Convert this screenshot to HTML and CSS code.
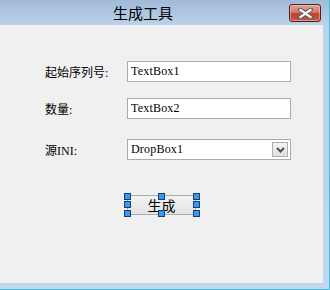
FILE: index.html
```html
<!DOCTYPE html>
<html lang="zh">
<head>
  <meta charset="UTF-8">
  <title>生成工具</title>
  <link rel="stylesheet" href="styles.css">
</head>
<body>

  <div class="window">
    <div class="titlebar">
      <span class="title">生成工具</span>
      <button class="close-btn" title="关闭">
        <svg width="15" height="11" viewBox="0 0 15 11">
          <path d="M2 1.5 L7.5 5 L13 1.5 M2 9.5 L7.5 6 L13 9.5" fill="none" stroke="#55606c" stroke-width="4" stroke-linecap="square"/>
          <path d="M2.5 2 L7.5 5.3 L12.5 2 M2.5 9 L7.5 5.7 L12.5 9" fill="none" stroke="#ffffff" stroke-width="2.2" stroke-linecap="square"/>
        </svg>
      </button>
    </div>

    <div class="client">
      <div class="form-row">
        <label class="form-label">起始序列号:</label>
        <input type="text" class="textbox" value="TextBox1" readonly>
      </div>
      <div class="form-row row-2">
        <label class="form-label">数量:</label>
        <input type="text" class="textbox" value="TextBox2" readonly>
      </div>
      <div class="form-row row-3">
        <label class="form-label">源INI:</label>
        <div class="combo">
          <span class="combo-text">DropBox1</span>
          <span class="combo-btn">
            <svg width="9" height="6" viewBox="0 0 9 6">
              <path d="M1 1 L4.5 4.5 L8 1" fill="none" stroke="#4d4d4d" stroke-width="2"/>
            </svg>
          </span>
        </div>
      </div>

      <div class="button-row">
        <div class="design-btn">
          <button class="gen-btn">生成</button>
          <span class="handle h-tl"></span>
          <span class="handle h-tm"></span>
          <span class="handle h-tr"></span>
          <span class="handle h-ml"></span>
          <span class="handle h-mr"></span>
          <span class="handle h-bl"></span>
          <span class="handle h-bm"></span>
          <span class="handle h-br"></span>
        </div>
      </div>
    </div>
  </div>

</body>
</html>
```

FILE: styles.css
```css
body {
  margin: 0;
  font-family: "Liberation Serif", "Noto Sans CJK SC", serif;
  background-color: #bdd3eb;
}

.window {
  width: 330px;
  height: 290px;
  box-sizing: border-box;
  display: flex;
  flex-direction: column;
  background: linear-gradient(to bottom, #a0bad7 0px, #bcd2ea 25px, #c0d6ee 100%);
  border-right: 1px solid #3fc2e6;
  border-bottom: 1px solid #3fc2e6;
}

.titlebar {
  height: 25px;
  display: flex;
  align-items: flex-start;
  position: relative;
}

.title {
  margin-left: 113px;
  margin-top: 3px;
  font-family: "Noto Sans CJK SC", sans-serif;
  font-size: 15px;
  line-height: 20px;
  color: #000;
}

.close-btn {
  position: absolute;
  left: 289px;
  top: 4px;
  width: 32px;
  height: 18px;
  padding: 0;
  border: 1px solid #4b2222;
  border-radius: 3px;
  background: linear-gradient(to bottom, #e8a192 0%, #d47a68 45%, #c0402c 55%, #c55a44 100%);
  box-shadow: inset 0 0 0 1px rgba(255, 210, 200, 0.5);
  display: flex;
  align-items: center;
  justify-content: center;
}

.client {
  flex: 1;
  margin-right: 6px;
  margin-bottom: 6px;
  background-color: #f0f0f0;
  padding-top: 36px;
  box-sizing: border-box;
}

.form-row {
  display: flex;
  align-items: center;
  height: 21px;
}

.row-2 {
  margin-top: 16px;
}

.row-3 {
  margin-top: 20px;
}

.form-label {
  width: 82px;
  padding-left: 45px;
  font-size: 12px;
  color: #000;
}

.textbox,
.combo {
  width: 164px;
  height: 21px;
  box-sizing: border-box;
  border: 1px solid #ababab;
  background-color: #fff;
  margin: 0;
  padding: 0 0 0 3px;
  font-family: "Liberation Serif", serif;
  font-size: 12px;
  letter-spacing: 0.2px;
  color: #000;
  outline: none;
}

.combo {
  display: flex;
  align-items: center;
  justify-content: space-between;
  padding-right: 2px;
}

.combo-btn {
  width: 16px;
  height: 15px;
  box-sizing: border-box;
  border: 1px solid #b0b0b0;
  background: linear-gradient(to bottom, #f4f4f4, #e0e0e0);
  display: flex;
  align-items: center;
  justify-content: center;
}

.button-row {
  margin-top: 35px;
  padding-left: 127px;
}

.design-btn {
  position: relative;
  width: 69px;
  height: 20px;
}

.gen-btn {
  width: 69px;
  height: 20px;
  padding: 0;
  border: 1px solid #acacac;
  background: linear-gradient(to bottom, #f2f2f2, #e3e3e3);
  font-family: "Noto Sans CJK SC", sans-serif;
  font-size: 14px;
  line-height: 18px;
  color: #000;
  display: flex;
  align-items: center;
  justify-content: center;
}

.handle {
  position: absolute;
  width: 5px;
  height: 5px;
  background-color: #3399ff;
  border: 1px solid #1c3d66;
}

.h-tl { left: -3px; top: -2px; }
.h-tm { left: 31px; top: -2px; }
.h-tr { left: 66px; top: -2px; }
.h-ml { left: -3px; top: 6px; }
.h-mr { left: 66px; top: 6px; }
.h-bl { left: -3px; top: 15px; }
.h-bm { left: 31px; top: 15px; }
.h-br { left: 66px; top: 15px; }
```
